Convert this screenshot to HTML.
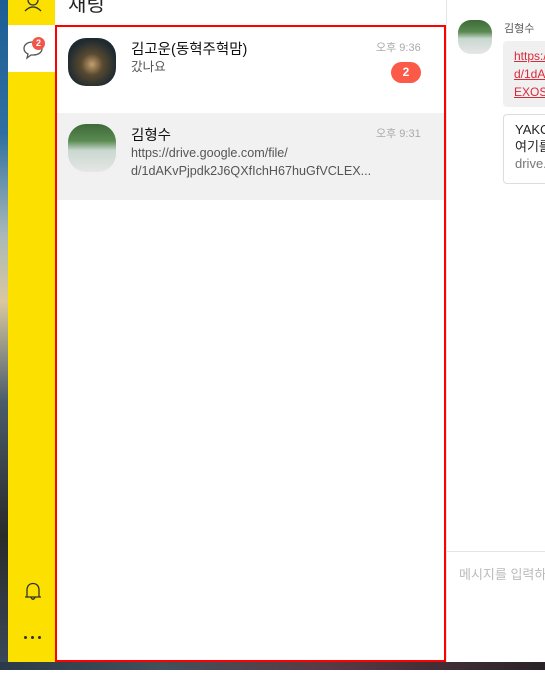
<!DOCTYPE html>
<html><head><meta charset="utf-8"><style>
*{margin:0;padding:0;box-sizing:border-box}
body{width:545px;height:687px;overflow:hidden;position:relative;background:#fff;font-family:"Liberation Sans","Noto Sans CJK KR",sans-serif}
.desk{position:absolute;left:0;top:0;width:8px;height:670px;background:linear-gradient(#1d5d95 0%,#2f6fa0 20%,#a9b8b8 35%,#d9c8a0 45%,#4a5c6a 60%,#2a2a2a 80%,#3a4a5a 100%)}
.bottom{position:absolute;left:0;top:662px;width:545px;height:8px;background:linear-gradient(90deg,#2b3a48,#44505a 30%,#5a3a44 60%,#2a2228)}
.side{position:absolute;left:8px;top:0;width:47px;height:662px;background:#fbe000}
.sel{position:absolute;left:8px;top:25px;width:47px;height:47px;background:#fff}
.list{position:absolute;left:55px;top:25px;width:391px;height:637px;border:2px solid #f00;background:#fff}
.row{position:absolute;left:0;width:387px;height:87px}
.av{position:absolute;left:11px;top:11px;width:48px;height:48px;border-radius:18px}
.nm{position:absolute;left:74px;top:11px;font-size:14.5px;color:#111}
.pv{position:absolute;left:74px;top:31px;font-size:12.6px;color:#555;line-height:18px}
.tm{position:absolute;left:319px;top:12px;font-size:11px;color:#aaa}
.chat{position:absolute;left:446px;top:0;width:99px;height:662px;background:#fff;border-left:1px solid #e5e5e5}
</style></head><body>
<div class="desk"></div>
<div class="side"></div>
<div class="sel"></div>
<svg style="position:absolute;left:22px;top:0" width="22" height="14"><circle cx="11" cy="0" r="5" fill="none" stroke="#333" stroke-width="1.3"/><path d="M3 11 Q11 3 19 11" fill="none" stroke="#333" stroke-width="1.3"/></svg>
<svg style="position:absolute;left:22px;top:38px" width="22" height="22"><path d="M11 4 C5 4 2 7 2 10.5 C2 13 4 15 6 16 L5 20 L9 17 C10 17 10.5 17 11 17 C17 17 20 14 20 10.5 C20 7 17 4 11 4Z" fill="none" stroke="#555" stroke-width="1.3"/></svg>
<div style="position:absolute;left:32px;top:37px;width:13px;height:13px;border-radius:50%;background:#f0574a;color:#fff;font-size:9px;font-weight:bold;text-align:center;line-height:13px">2</div>
<svg style="position:absolute;left:22px;top:580px" width="22" height="22"><path d="M5 17 L5 10 C5 6 7.5 3.5 11 3.5 C14.5 3.5 17 6 17 10 L17 17 Z M3 17 L19 17" fill="none" stroke="#333" stroke-width="1.3"/><path d="M9 17.5 Q11 21 13 17.5" fill="none" stroke="#333" stroke-width="1.3"/></svg>
<div style="position:absolute;left:22px;top:636px;width:20px;height:3px;background:radial-gradient(circle,#333 1.4px,transparent 1.6px) 0 0/7px 3px repeat-x"></div>
<div style="position:absolute;left:68px;top:-12px;font-size:20px;color:#222">채팅</div>
<div class="list">
 <div class="row" style="top:0;background:#fff">
  <div class="av" style="background:radial-gradient(circle at 50% 55%,#c4a070 0%,#5a4a30 30%,#1e2a30 70%,#223040)"></div>
  <div class="nm">김고운(동혁주혁맘)</div>
  <div class="pv">갔나요</div>
  <div class="tm">오후 9:36</div>
  <div style="position:absolute;left:334px;top:35px;width:30px;height:21px;border-radius:11px;background:#fb5a48;color:#fff;font-size:12px;font-weight:bold;text-align:center;line-height:21px">2</div>
 </div>
 <div class="row" style="top:86px;background:#f1f1f1">
  <div class="av" style="background:linear-gradient(#3e6a3a 0%,#5a8a50 35%,#c9d8d0 55%,#e6e6e6 100%)"></div>
  <div class="nm">김형수</div>
  <div class="pv">https://drive.google.com/file/<br>d/1dAKvPjpdk2J6QXfIchH67huGfVCLEX...</div>
  <div class="tm">오후 9:31</div>
 </div>
</div>
<div class="chat">
 <div style="position:absolute;left:11px;top:20px;width:34px;height:34px;border-radius:13px;background:linear-gradient(#3e6a3a 0%,#5a8a50 35%,#c9d8d0 55%,#e6e6e6 100%)"></div>
 <div style="position:absolute;left:57px;top:20px;font-size:11px;color:#555">김형수</div>
 <div style="position:absolute;left:56px;top:41px;width:50px;height:66px;background:#f0f0f0;border-radius:4px;padding:6px 0 0 11px;font-size:12px;line-height:18px;color:#d92a3a;text-decoration:underline;white-space:nowrap">https:/<br>d/1dA<br>EXOS</div>
 <div style="position:absolute;left:56px;top:114px;width:50px;height:70px;border:1px solid #ddd;border-radius:4px;padding:6px 0 0 11px;font-size:13px;line-height:17px;color:#222;white-space:nowrap">YAKC<br>여기를<br><span style="color:#777">drive.</span></div>
 <div style="position:absolute;left:0;top:551px;width:99px;height:1px;background:#e5e5e5"></div>
 <div style="position:absolute;left:12px;top:564px;font-size:13px;color:#bbb;white-space:nowrap">메시지를 입력하</div>
</div>
<div class="bottom"></div>
</body></html>
